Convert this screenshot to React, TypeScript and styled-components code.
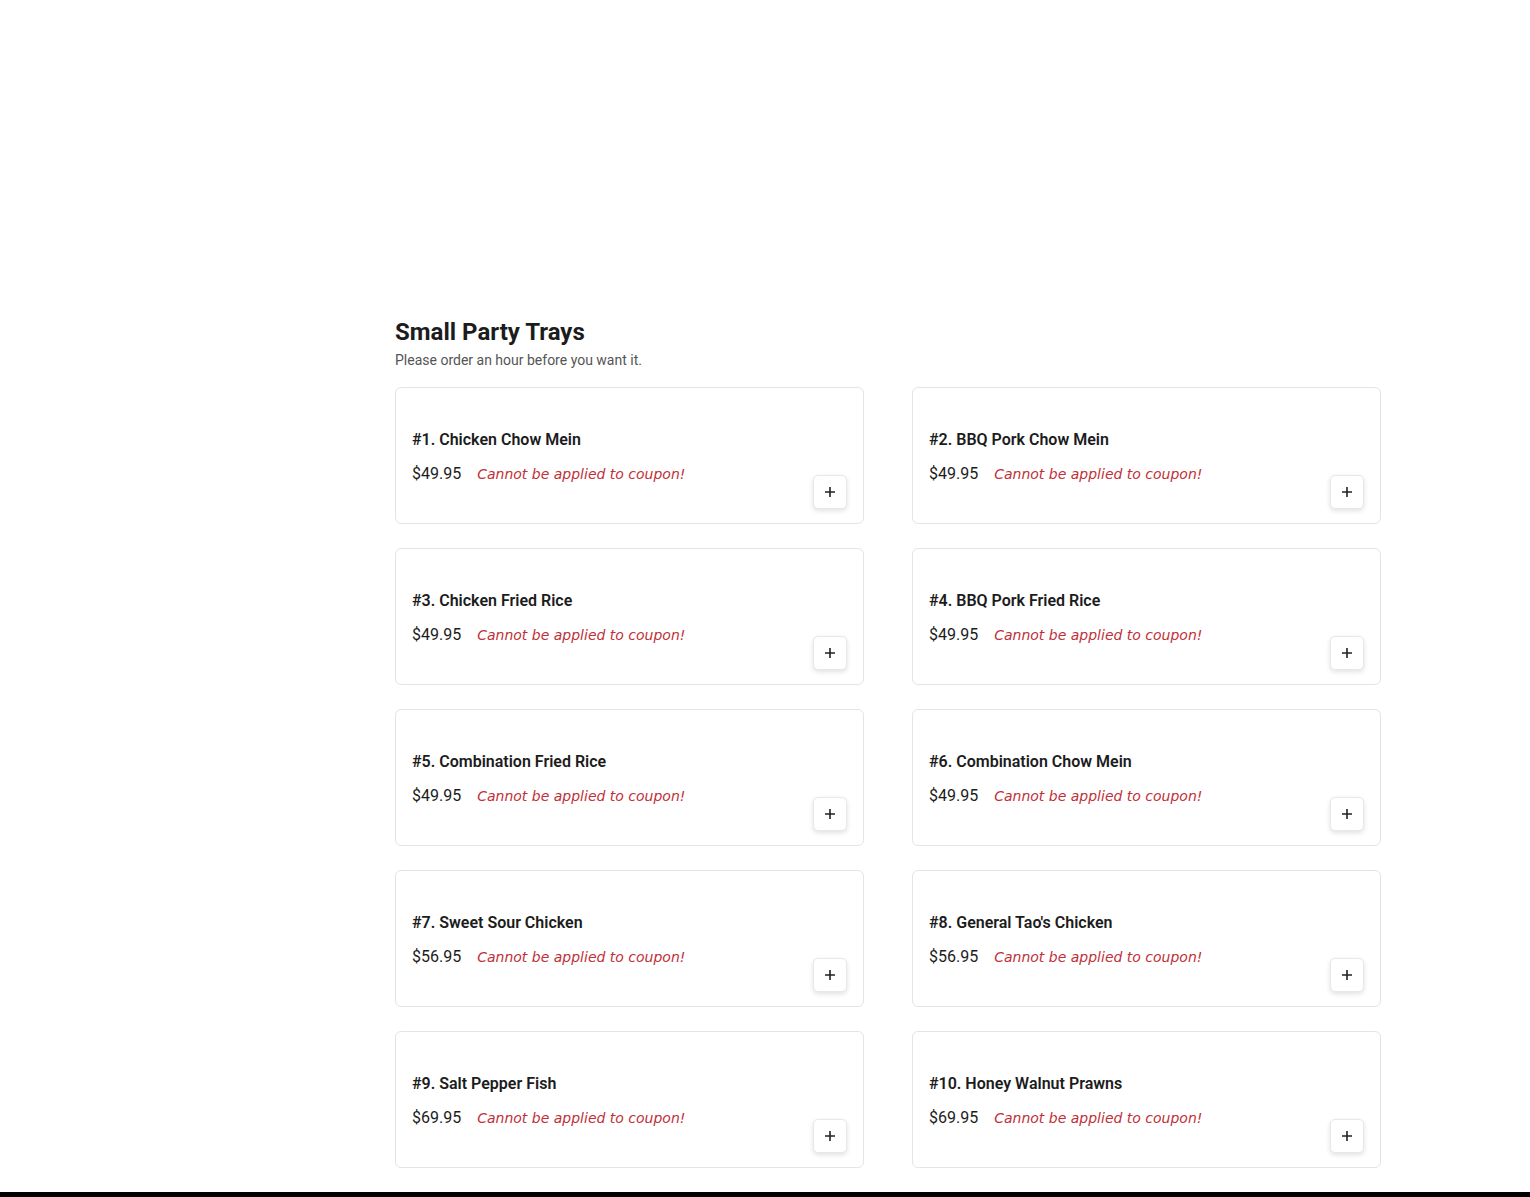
import React from "react";
import styled, { createGlobalStyle } from "styled-components";

const GlobalStyle = createGlobalStyle`
    html, body {
        margin: 0;
        padding: 0;
        background: #ffffff;
        font-family: Roboto, "Liberation Sans", Arial, sans-serif;
        color: #1c1c1c;
    }
    * {
        box-sizing: border-box;
    }
`;

const Page = styled.div`
    min-height: 1197px;
    display: flex;
    flex-direction: column;
`;

const Main = styled.main`
    flex: 1;
    display: grid;
    grid-template-columns: 395px 986px;
    padding-top: 317px;
    padding-bottom: 24px;
`;

const Section = styled.section`
    grid-column: 2;
    display: flex;
    flex-direction: column;
`;

const Heading = styled.h2`
    margin: 0;
    font-size: 24px;
    line-height: 30px;
    font-weight: 700;
    color: #1c1c1c;
`;

const Subtitle = styled.p`
    margin: 3px 0 0;
    font-size: 14px;
    line-height: 20px;
    color: #555555;
`;

const Grid = styled.div`
    margin-top: 17px;
    display: grid;
    grid-template-columns: repeat(2, 1fr);
    column-gap: 48px;
    row-gap: 24px;
`;

const Card = styled.div`
    height: 137px;
    border: 1px solid #e4e4e4;
    border-radius: 6px;
    display: flex;
    align-items: center;
    justify-content: space-between;
    padding: 0 16px;
    background: #ffffff;
`;

const Info = styled.div`
    display: flex;
    flex-direction: column;
    gap: 10px;
    padding-top: 3px;
`;

const ItemName = styled.h3`
    margin: 0;
    font-size: 16px;
    line-height: 24px;
    font-weight: 600;
    color: #1c1c1c;
`;

const PriceRow = styled.div`
    display: flex;
    align-items: center;
    gap: 16px;
    line-height: 24px;
`;

const Price = styled.span`
    font-size: 16px;
    color: #1c1c1c;
`;

const Notice = styled.span`
    font-family: "DejaVu Sans", Verdana, sans-serif;
    font-style: italic;
    font-size: 14px;
    color: #bf3038;
`;

const AddButton = styled.button`
    align-self: flex-end;
    margin-bottom: 14px;
    width: 34px;
    height: 34px;
    padding: 0;
    border: 1px solid #e8e8e8;
    border-radius: 5px;
    background: #ffffff;
    box-shadow: 0 2px 5px rgba(0, 0, 0, 0.12);
    display: flex;
    align-items: center;
    justify-content: center;
    cursor: pointer;
    color: #222222;
`;

const Footer = styled.footer`
    height: 5px;
    background: #000000;
`;

const items = [
    { name: "#1. Chicken Chow Mein", price: "$49.95" },
    { name: "#2. BBQ Pork Chow Mein", price: "$49.95" },
    { name: "#3. Chicken Fried Rice", price: "$49.95" },
    { name: "#4. BBQ Pork Fried Rice", price: "$49.95" },
    { name: "#5. Combination Fried Rice", price: "$49.95" },
    { name: "#6. Combination Chow Mein", price: "$49.95" },
    { name: "#7. Sweet Sour Chicken", price: "$56.95" },
    { name: "#8. General Tao's Chicken", price: "$56.95" },
    { name: "#9. Salt Pepper Fish", price: "$69.95" },
    { name: "#10. Honey Walnut Prawns", price: "$69.95" },
];

const PlusIcon = () => (
    <svg width="12" height="12" viewBox="0 0 12 12" fill="none">
        <path d="M6 1v10M1 6h10" stroke="currentColor" strokeWidth="1.6" />
    </svg>
);

const App = () => {
    return (
        <Page>
            <GlobalStyle />
            <Main>
                <Section>
                    <Heading>Small Party Trays</Heading>
                    <Subtitle>Please order an hour before you want it.</Subtitle>
                    <Grid>
                        {items.map((item) => (
                            <Card key={item.name}>
                                <Info>
                                    <ItemName>{item.name}</ItemName>
                                    <PriceRow>
                                        <Price>{item.price}</Price>
                                        <Notice>Cannot be applied to coupon!</Notice>
                                    </PriceRow>
                                </Info>
                                <AddButton aria-label="Add">
                                    <PlusIcon />
                                </AddButton>
                            </Card>
                        ))}
                    </Grid>
                </Section>
            </Main>
            <Footer />
        </Page>
    );
};

export default App;
